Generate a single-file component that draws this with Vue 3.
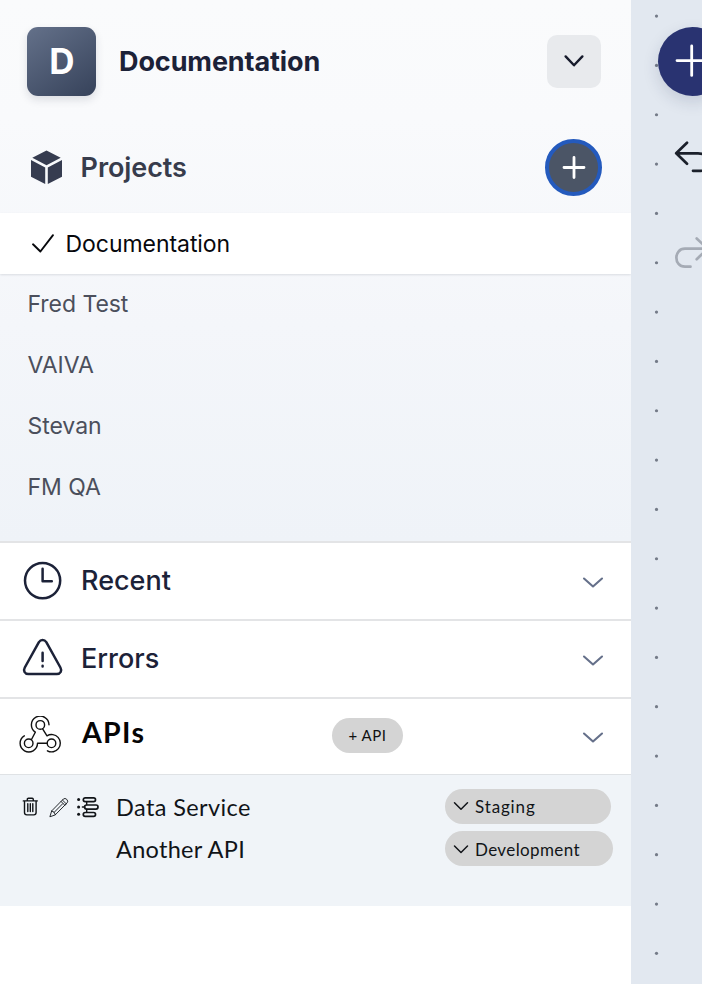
<script setup>
const projects = ['Fred Test', 'VAIVA', 'Stevan', 'FM QA']
const dots = Array.from({ length: 20 }, (_, i) => 16.1 + i * 49.33)
</script>

<template>
  <div class="app">
    <aside class="sidebar">
      <div class="top">
        <header class="header">
          <div class="avatar"><span>D</span></div>
          <h1 class="title">Documentation</h1>
          <button class="switcher" aria-label="Switch project">
            <svg width="22" height="16" viewBox="0 0 22 16"><path d="M2.6 3.4 L11 12.3 L19.4 3.4" /></svg>
          </button>
        </header>
        <div class="projects-head">
          <svg class="cube" width="33" height="36" viewBox="0 0 33 36">
            <path d="M16.5 0.5 L30.7 7.8 L16.5 15.2 L2.3 7.8 Z M1 10.1 L15.2 17.5 V34.1 L1 26.7 Z M32 10.1 L17.8 17.5 V34.1 L32 26.7 Z" />
          </svg>
          <h2 class="label projects-label">Projects</h2>
          <button class="add" aria-label="Add project">
            <svg width="26" height="26" viewBox="0 0 26 26"><path d="M13 2.5 V22.5 M3 12.5 H23" /></svg>
          </button>
        </div>
        <div class="item active">
          <svg width="24" height="22" viewBox="0 0 24 22"><path d="M2 11.3 L9.4 18.5 L22 2.2" /></svg>
          <span class="active-name">Documentation</span>
        </div>
        <div v-for="p in projects" :key="p" class="item"><span>{{ p }}</span></div>
      </div>

      <section class="row">
        <svg class="icon" width="42" height="42" viewBox="0 0 42 42">
          <circle cx="20.6" cy="20.6" r="17.6" /><path d="M20.6 8.8 V21.2 H29.8" />
        </svg>
        <h2 class="label recent-label">Recent</h2>
        <svg class="chev" width="22" height="14" viewBox="0 0 22 14"><path d="M2 3.5 L11 11.5 L20 3.5" /></svg>
      </section>
      <section class="row">
        <svg class="icon" width="42" height="42" viewBox="0 0 42 42">
          <path d="M16.9 4.1 C18.8 1.4 22.4 1.4 24.3 4.1 L38.4 29.5 C40.2 32.8 38.6 36 34.8 36 H6.4 C2.6 36 1 32.8 2.8 29.5 Z" />
          <path d="M20.6 14.8 V23 M20.6 27.8 V28.4" />
        </svg>
        <h2 class="label errors-label">Errors</h2>
        <svg class="chev" width="22" height="14" viewBox="0 0 22 14"><path d="M2 3.5 L11 11.5 L20 3.5" /></svg>
      </section>
      <section class="row apis">
        <svg class="hook" width="44" height="40" viewBox="0 0 44 40">
          <g transform="translate(0 -1.5)">
            <circle cx="22.3" cy="10.4" r="4.3" /><circle cx="10.7" cy="28.8" r="4.3" /><circle cx="33.5" cy="28.8" r="4.3" />
            <path d="M31 10.2 A8.8 8.8 0 1 0 17.3 17.7 L13.6 24.8" />
            <path d="M24.6 14.4 L29 21.3 A8.7 8.7 0 1 1 29.4 36.3" />
            <path d="M29 28.8 H19.5 A8.7 8.7 0 1 1 6.3 21.3" />
          </g>
        </svg>
        <h2 class="apis-label">APIs</h2>
        <button class="add-api">+ API</button>
        <svg class="chev" width="22" height="14" viewBox="0 0 22 14"><path d="M2 2.5 L11 10.5 L20 2.5" /></svg>
      </section>
      <div class="services">
        <div class="service">
          <div class="tools">
            <svg class="trash" width="18" height="20" viewBox="0 0 18 20">
              <path d="M2.3 3.9 H16.3 M6.3 3.6 V2.4 Q6.3 1.3 7.4 1.3 H11.2 Q12.3 1.3 12.3 2.4 V3.6 M3.5 4.1 V15.6 Q3.5 17.9 5.8 17.9 H12.8 Q15.1 17.9 15.1 15.6 V4.1 M6.8 6.8 V14.6 M9.3 6.8 V14.6 M11.8 6.8 V14.6" />
            </svg>
            <svg class="pencil" width="22" height="22" viewBox="0 0 22 22">
              <path d="M2 20.4 L3.7 14.9 L15.3 3.1 Q17 1.6 18.8 3.4 Q20.6 5.2 19.1 6.9 L7.4 18.7 Z M3.7 14.9 Q6.8 15.4 7.4 18.7 M13 5.4 L16.8 9.2 M14.4 4 L18.2 7.8 M6.3 16.2 L14.6 7.8" />
            </svg>
            <svg class="list" width="24" height="22" viewBox="0 0 24 22">
              <rect x="7.3" y="1.8" width="12.2" height="3.8" rx="1.9" /><rect x="8.6" y="9" width="13.4" height="4.1" rx="2" /><rect x="7.3" y="16.5" width="12.2" height="3.8" rx="1.9" />
              <path d="M8.7 11 H6.4 M10.7 5.8 V8.6 M10.7 13.4 V16.3" class="link" />
              <circle cx="2.6" cy="3.6" r="1.5" /><circle cx="2.6" cy="11" r="1.5" /><circle cx="2.6" cy="18.3" r="1.5" />
            </svg>
          </div>
          <span class="name data-name">Data Service</span>
          <button class="env staging">
            <svg width="16" height="10" viewBox="0 0 16 10"><path d="M1.5 1.8 L8 8.3 L14.5 1.8" /></svg><span>Staging</span>
          </button>
        </div>
        <div class="service">
          <div class="tools"></div>
          <span class="name another-name">Another API</span>
          <button class="env development">
            <svg width="16" height="10" viewBox="0 0 16 10"><path d="M1.5 2 L8 8.5 L14.5 2" /></svg><span>Development</span>
          </button>
        </div>
      </div>
    </aside>

    <main class="canvas">
      <svg class="dots" width="71" height="984" viewBox="0 0 71 984">
        <circle v-for="y in dots" :key="y" cx="25.5" :cy="y" r="1.6" />
      </svg>
      <div class="actions">
        <button class="create" aria-label="Create">
          <svg width="36" height="36" viewBox="0 0 36 36"><path d="M17.7 3 V32.4 M3 17.6 H32.4" /></svg>
        </button>
        <svg class="undo" width="44" height="36" viewBox="0 0 44 36"><path d="M15 3.7 L4.2 14.3 L15 24.8 M4.4 14.3 H26 C40 14.3 40 31.8 29 31.8 H21" /></svg>
        <svg class="redo" width="44" height="36" viewBox="0 0 44 36"><path d="M24.7 2.5 L35.5 12.7 L24.7 23.2 M35 12.7 H13 C1.5 12.7 1.5 30.7 13 30.7 H18.5" /></svg>
      </div>
    </main>
  </div>
</template>

<style>
body { background: #fff; overflow: hidden; }
</style>

<style scoped>
* { box-sizing: border-box; }
h1, h2 { margin: 0; }
button { border: 0; padding: 0; font: inherit; color: inherit; }
svg { display: block; flex: none; fill: none; stroke: currentColor; stroke-linecap: round; stroke-linejoin: round; }
.app { display: flex; width: 702px; height: 984px; overflow: hidden; font-family: Inter, sans-serif; white-space: nowrap; }
.sidebar { flex: none; width: 631px; background: #fff; }
.top { height: 541px; background: linear-gradient(#fafbfc, #f9fafc 22%, #f4f6fa 60%, #eff3f8); }
.header { display: flex; align-items: center; height: 122px; padding: 0 30px 0 27.4px; }
.avatar { display: flex; align-items: center; justify-content: center; width: 69px; height: 69px; border-radius: 11px; background: linear-gradient(145deg, #64718a, #36425a); box-shadow: 0 4px 9px rgba(30, 41, 59, .13); color: #fff; font-size: 35px; font-weight: 700; }
.title { margin-left: 22.6px; font-size: 27px; font-weight: 700; letter-spacing: -.1px; color: #1c2238; }
.switcher { display: flex; align-items: center; justify-content: center; width: 54px; height: 53px; margin-left: auto; border-radius: 10px; background: #e8eaed; color: #171b2c; }
.switcher svg { stroke-width: 2.4; }
.projects-head { display: flex; align-items: center; height: 91px; padding: 0 29px 0 30px; color: #363c4e; }
.cube { fill: #363c50; stroke: none; }
.label { padding-bottom: 1px; font-size: 27px; font-weight: 600; color: #1c2238; }
.projects-label { margin-left: 17.6px; padding-bottom: 0; letter-spacing: -.08px; color: #373c4c; }
.add { display: flex; align-items: center; justify-content: center; width: 57px; height: 57px; margin-left: auto; border: 4px solid #245abd; border-radius: 50%; background: #4b5566; color: #fff; }
.add svg { stroke-width: 2.8; }
.item { display: flex; align-items: center; height: 61px; padding: 0 0 2px 27.5px; font-size: 23px; letter-spacing: -.05px; color: #4b4f5c; }
.active { padding: 0 0 0 31px; background: #fff; color: #07080c; box-shadow: 0 1px 2px rgba(30, 41, 59, .12); }
.active svg { stroke-width: 1.9; }
.active-name { margin-left: 10.5px; }
.row { display: flex; align-items: center; height: 78px; padding: 0 27px 0 22px; border-top: 2px solid #e3e4e6; color: #1c2238; }
.icon { stroke-width: 2.5; }
.recent-label, .errors-label { margin-left: 17px; font-weight: 500; }
.chev { margin-left: auto; color: #65708a; stroke-width: 2.1; position: relative; top: 1px; }
.apis { height: 77px; padding: 0 27px 2px 18px; }
.hook { color: #111; stroke-width: 1.4; }
.apis-label { width: 250px; margin-left: 20px; padding-bottom: 7px; font-family: Lato, sans-serif; font-size: 28.5px; font-weight: 700; letter-spacing: 1.3px; color: #050505; }
.add-api { width: 71px; height: 35px; padding-bottom: 2px; border-radius: 18px; background: #d4d4d4; font-family: Lato, sans-serif; font-size: 15px; letter-spacing: .5px; color: #111; }
.apis .chev { top: 2px; }
.services { display: flex; flex-direction: column; gap: 6px; height: 132px; padding-top: 14px; border-top: 1px solid #dfe2e5; background: #f0f4f8; font-family: Lato, sans-serif; color: #111418; }
.service { display: flex; align-items: center; height: 36px; }
.tools { display: flex; align-items: center; width: 116px; padding-left: 21px; }
.trash { stroke-width: 1.4; }
.pencil { margin-left: 9px; stroke-width: .9; }
.list { margin-left: 6px; stroke-width: 1.7; }
.list .link { stroke-width: 1.4; }
.list circle { fill: currentColor; stroke: none; }
.name { width: 329px; font-size: 23.5px; }
.data-name { letter-spacing: .4px; }
.another-name { letter-spacing: .28px; }
.env { display: flex; align-items: center; height: 35px; margin-bottom: 1px; padding-left: 8px; border-radius: 18px; background: #d4d4d4; font-size: 17px; }
.env svg { margin-right: 6px; stroke-width: 1.5; }
.staging { width: 166px; padding-bottom: 1px; letter-spacing: .85px; }
.development { width: 168px; padding-top: 1px; letter-spacing: .38px; }
.canvas { position: relative; flex: none; width: 71px; height: 984px; background: #e2e8f0; overflow: hidden; }
.dots { position: absolute; inset: 0; fill: #747b88; stroke: none; }
.actions { position: relative; width: 100px; padding: 26.5px 0 0 26.5px; }
.create { display: flex; align-items: center; justify-content: center; width: 69px; height: 69px; border-radius: 50%; background: #293371; color: #fff; box-shadow: 0 6px 16px rgba(30, 41, 80, .15); }
.create svg { stroke-width: 2.8; }
.undo { margin: 43px 0 0 14px; color: #1b202b; stroke-width: 2.7; }
.redo { margin: 61px 0 0 14px; color: #a5abb5; stroke-width: 2.7; }
</style>
